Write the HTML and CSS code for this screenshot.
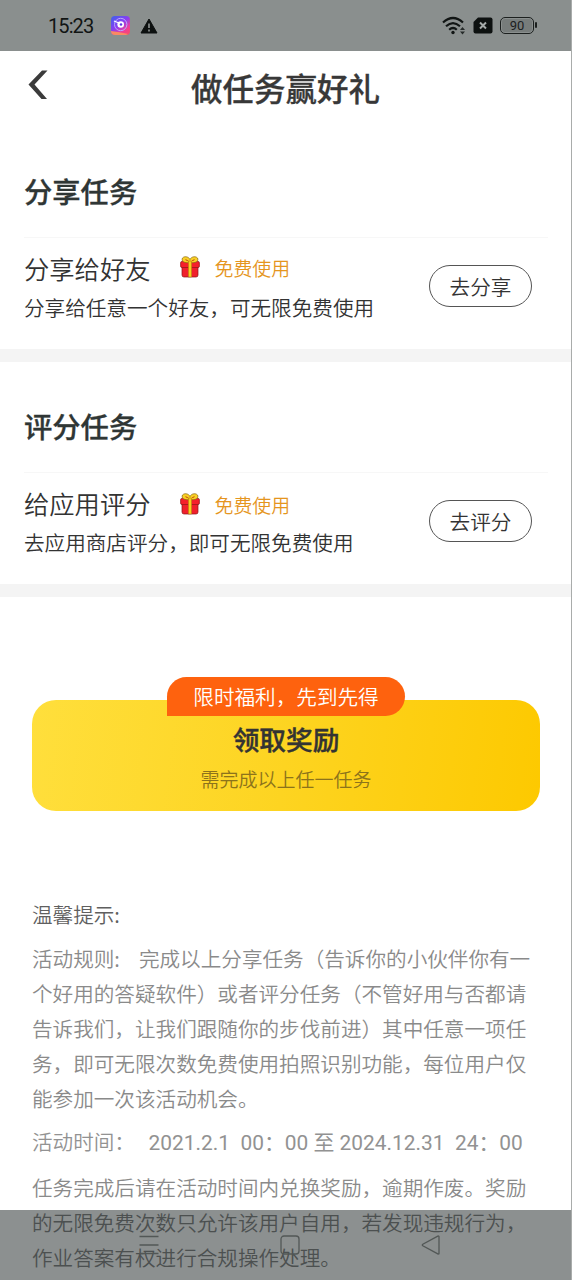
FILE: index.html
```html
<!DOCTYPE html>
<html lang="zh-CN">
<head>
<meta charset="utf-8">
<title>做任务赢好礼</title>
<link rel="stylesheet" href="styles.css">
</head>
<body>
<svg width="0" height="0" class="defs">
  <symbol id="gift" viewBox="0 0 20 22">
    <path d="M2 10h16v9q0 2-2 2H4q-2 0-2-2z" fill="#f0202c" stroke="#8c1518" stroke-width=".7"/>
    <rect x=".6" y="5.5" width="18.8" height="6" rx="1.3" fill="#f5202b" stroke="#8c1518" stroke-width=".7"/>
    <path d="M10 6.500C4 7.500 1 5 2.500 2 5-.5 9 1 10 3.500 11 1 15-.5 17.500 2 19 5 16 7.500 10 6.500z" fill="#f9d024" stroke="#8a6410" stroke-width=".7"/>
    <path d="M5.500 3.700l2.300 1M14.500 3.700l-2.300 1" stroke="#b3340c" stroke-width=".9"/>
    <rect x="8.300" y="5" width="3.400" height="16" fill="#f9cf1f" stroke="#a8640f" stroke-width=".5"/>
  </symbol>
</svg>
<div class="screen">
  <div class="status">
    <span class="time">15:23</span>
    <svg class="app" width="19" height="19" viewBox="0 0 19 19">
      <defs><linearGradient id="ag" x1="0" y1="0" x2=".8" y2="1"><stop offset="0" stop-color="#3c62ee"/><stop offset=".5" stop-color="#8b3df0"/><stop offset=".8" stop-color="#ef3d9a"/><stop offset="1" stop-color="#f74a70"/></linearGradient></defs>
      <rect width="19" height="19" rx="4" fill="url(#ag)"/>
      <path d="M0 15q9 1 17 3l-2 1H4q-4 0-4-4z" fill="#fa8a62"/>
      <circle cx="9.700" cy="8.500" r="6.200" fill="none" stroke="#b9a5ff" stroke-width="1"/>
      <circle cx="9.700" cy="8.500" r="3.300" fill="#fff"/>
      <path d="M3 5l5 2" stroke="#fff" stroke-width="1.300"/>
      <circle cx="10" cy="8.500" r="1.300" fill="#5a3be8"/>
    </svg>
    <svg class="warn" width="18" height="16" viewBox="0 0 18 16">
      <path d="M9 1L17 15H1z" fill="#0d1110" stroke="#0d1110" stroke-linejoin="round"/>
      <path d="M9 5.500v4.500M9 11.500v2" stroke="#8a8f8e" stroke-width="1.700"/>
    </svg>
    <div class="right">
      <svg width="24" height="20" viewBox="0 0 24 20" fill="none" stroke="#111514" stroke-width="2.200">
        <path d="M1 6.500Q11 -2.500 21 6.500M4 10.300Q11 3.800 18 10.300M7.200 13.800Q11 10.200 14.800 13.800"/>
        <circle cx="11" cy="16.500" r="1.700" fill="#111514" stroke="none"/>
        <path d="M18 14l2.500-3 2.500 3zM18 15.500l2.500 3 2.500-3z" fill="#252a29" stroke="none"/>
      </svg>
      <svg width="20" height="17" viewBox="0 0 20 17">
        <path d="M5 .5h12.500q2 0 2 2v12q0 2-2 2h-15q-2 0-2-2V5z" fill="#0d1110"/>
        <path d="M7 5.500l6 6M13 5.500l-6 6" stroke="#a5aaa9" stroke-width="2"/>
      </svg>
      <div class="battery"><span>90</span></div>
    </div>
  </div>
  <header class="header">
    <svg class="back" width="20" height="30" viewBox="0 0 20 30"><path d="M14 .5H19.500L6.500 14.500 19 29H13.500L.5 14.500z" fill="#3b3b3b"/></svg>
    <h1>做任务赢好礼</h1>
  </header>
  <section class="task">
    <h2>分享任务</h2>
    <div class="row">
      <div class="info">
        <div class="name">分享给好友<svg class="gift"><use href="#gift"/></svg><em>免费使用</em></div>
        <p>分享给任意一个好友，可无限免费使用</p>
      </div>
      <button>去分享</button>
    </div>
  </section>
  <section class="task">
    <h2>评分任务</h2>
    <div class="row">
      <div class="info">
        <div class="name">给应用评分<svg class="gift"><use href="#gift"/></svg><em>免费使用</em></div>
        <p>去应用商店评分，即可无限免费使用</p>
      </div>
      <button>去评分</button>
    </div>
  </section>
  <div class="reward">
    <div class="badge">限时福利，先到先得</div>
    <strong>领取奖励</strong>
    <span class="need">需完成以上任一任务</span>
  </div>
  <div class="tips">
    <div class="tips-title">温馨提示:</div>
    <p>活动规则:<span class="gap-rule"></span>完成以上分享任务（告诉你的小伙伴你有一<br>个好用的答疑软件）或者评分任务（不管好用与否都请<br>告诉我们，让我们跟随你的步伐前进）其中任意一项任<br>务，即可无限次数免费使用拍照识别功能，每位用户仅<br>能参加一次该活动机会。</p>
    <p class="period"><span>活动时间：</span><span>2021.2.1</span><span>00：00 至 2024.12.31</span><span>24：00</span></p>
    <p>任务完成后请在活动时间内兑换奖励，逾期作废。奖励<br>的无限免费次数只允许该用户自用，若发现违规行为，<br>作业答案有权进行合规操作处理。</p>
  </div>
  <nav class="nav">
    <svg width="20" height="20" viewBox="0 0 20 20"><path d="M.5 1.500h19M.5 10h19M.5 18.500h19"/></svg>
    <svg width="20" height="20" viewBox="0 0 20 20"><rect x="1" y="1" width="18" height="18" rx="3"/></svg>
    <svg width="20" height="20" viewBox="0 0 20 20"><path d="M18 1.500v17q-.2.800-1.200.3L1.800 10.800q-1-.8 0-1.600L16.800 1.200q1-.5 1.200.3z"/></svg>
  </nav>
</div>
</body>
</html>
```

FILE: styles.css
```css
* { box-sizing: border-box; margin: 0; padding: 0; }
body {
  background: #fff;
  font-family: "Noto Sans CJK SC", sans-serif;
  font-weight: 350;
  color: #333;
}
.defs { position: absolute; }
.screen {
  position: relative;
  width: 572px;
  height: 1280px;
  overflow: hidden;
  background: #fff;
  border-right: 1px solid #a9acab;
  white-space: nowrap;
}
.status {
  height: 51px;
  background: #8a8f8e;
  display: flex;
  align-items: center;
  padding: 0 35px 0 48px;
  margin-right: -1px;
}
.time { font: 400 20px/30px Roboto, sans-serif; color: #111514; width: 63px; letter-spacing: -.9px; padding-top: 1px; }
.warn { margin-left: 10px; }
.right { margin-left: auto; display: flex; align-items: center; gap: 7px; }
.battery {
  position: relative;
  width: 34px;
  height: 17px;
  margin-right: 3px;
  border: 1.500px solid #1c201f;
  border-radius: 5px;
  padding: 1px;
}
.battery span { display: block; background: #777c7b; border-radius: 3px; font: 400 13px/13px Roboto, sans-serif; color: #1c201f; text-align: center; }
.battery::after { content: ""; position: absolute; right: -4px; top: 4px; width: 2px; height: 6px; border-radius: 1px; background: #1c201f; }
.header { height: 76px; display: flex; justify-content: center; position: relative; }
.header h1 { font-size: 31.500px; line-height: 72px; font-weight: 500; color: #383838; -webkit-text-stroke: .3px #383838; }
.back { position: absolute; left: 28px; top: 19px; }
.task { height: 235px; padding: 35px 23px 0 24px; border-bottom: 13px solid #f4f4f4; }
.task h2 { height: 76px; border-bottom: 1px solid #f7f7f7; font-size: 28.300px; line-height: 58px; font-weight: 500; color: #2f3635; -webkit-text-stroke: .3px #2f3635; }
.header + .task h2 { line-height: 57px; }
.row { display: flex; justify-content: space-between; padding: 11px 16px 0 0; }
.info { width: 380px; }
.name { display: flex; align-items: center; height: 39px; font-size: 25.300px; line-height: 39px; color: #333; }
.gift { width: 20px; height: 22px; margin: -3px 15px 0 29px; }
.name em { font-style: normal; font-size: 18.900px; color: #e5951e; margin-top: -2px; }
.task + .task .gift { margin-top: 1px; }
.task + .task em { margin-top: 1px; }
.info p { font-size: 20.600px; line-height: 39px; }
.row button { flex: none; width: 103px; height: 42px; margin-top: 16px; border: 1px solid #555; border-radius: 21px; background: #fff; color: #333; font: inherit; font-size: 20.600px; }
.reward {
  position: relative;
  margin: 103px 31px 0 32px;
  height: 111px;
  border-radius: 24px;
  background: linear-gradient(97deg, #ffdf3c, #fdd421 50%, #fdc900);
  display: flex;
  flex-direction: column;
  align-items: center;
  padding-top: 19px;
}
.badge { position: absolute; top: -23px; left: 135px; width: 238px; height: 39px; border-radius: 20px 20px 20px 0; background: #fe620e; color: #fff; text-align: center; font-size: 20.600px; line-height: 39px; }
.reward strong { font-size: 26.700px; line-height: 40px; font-weight: 500; color: #333; -webkit-text-stroke: .4px #333; }
.need { font-size: 19px; line-height: 39px; color: #8c731b; }
.tips { padding: 86px 0 0 32px; font-size: 20.600px; line-height: 35px; color: #8a8a8a; }
.tips-title { color: #5f5f5f; margin-bottom: 9px; }
.tips p { margin-bottom: 9.500px; }
.gap-rule { display: inline-block; width: 19px; }
.tips .period { display: flex; gap: 10.500px; font-family: Roboto, "Noto Sans CJK SC", sans-serif; font-weight: 400; color: #929292; }
.period span { font-size: 20.900px; }
.period span:first-child { font-size: 20.600px; font-weight: 350; margin-right: 3px; }
.nav {
  position: absolute;
  left: 0;
  top: 1210px;
  width: 572px;
  height: 70px;
  background: rgba(4, 14, 12, .46);
  display: flex;
  align-items: center;
  justify-content: center;
  gap: 121px;
  padding-left: 7px;
}
.nav svg { fill: none; stroke: #525756; stroke-width: 1.300; }
```
